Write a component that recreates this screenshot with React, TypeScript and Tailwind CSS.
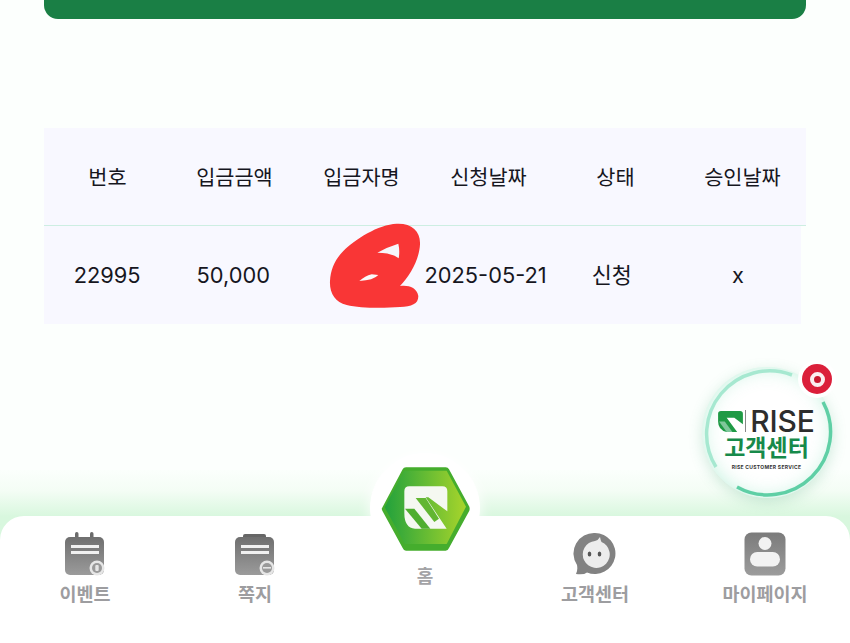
const HEADERS = ["번호", "입금금액", "입금자명", "신청날짜", "상태", "승인날짜"];
const CELLS = ["22995", "50,000", "", "2025-05-21", "신청", "x"];

function CalendarIcon() {
  return (
    <svg width="42" height="44" viewBox="0 0 42 44">
      <defs>
        <linearGradient id="cal" x1="0" y1="0" x2="0" y2="1">
          <stop offset="0" stopColor="#6f6f6f" />
          <stop offset="1" stopColor="#9b9b9b" />
        </linearGradient>
      </defs>
      <rect x="11" y="0" width="3.500" height="10" rx="1.700" fill="#6b6b6b" />
      <rect x="26" y="0" width="3.500" height="10" rx="1.700" fill="#6b6b6b" />
      <rect x="1" y="5" width="39" height="38" rx="5" fill="url(#cal)" />
      <rect x="7" y="13" width="28" height="3" fill="#f1f1f1" />
      <rect x="7" y="19" width="28" height="3" fill="#f1f1f1" />
      <circle cx="33" cy="36" r="7.500" fill="#e6e6e6" />
      <circle cx="33" cy="36" r="5" fill="#9a9a9a" />
      <rect x="31.300" y="33" width="3.400" height="6" rx="1" fill="#e6e6e6" />
    </svg>
  );
}

function NoteIcon() {
  return (
    <svg width="42" height="44" viewBox="0 0 42 44">
      <defs>
        <linearGradient id="note" x1="0" y1="0" x2="0" y2="1">
          <stop offset="0" stopColor="#6f6f6f" />
          <stop offset="1" stopColor="#9b9b9b" />
        </linearGradient>
      </defs>
      <rect x="9" y="2" width="23" height="6" rx="2" fill="#666" />
      <rect x="1" y="5" width="39" height="38" rx="5" fill="url(#note)" />
      <rect x="7" y="13" width="28" height="3" fill="#f1f1f1" />
      <rect x="7" y="19" width="28" height="3" fill="#f1f1f1" />
      <circle cx="33" cy="36" r="7.500" fill="#e6e6e6" />
      <circle cx="33" cy="36" r="5" fill="#9a9a9a" />
      <rect x="29" y="35" width="8" height="1.600" fill="#e6e6e6" />
    </svg>
  );
}

function ChatIcon() {
  return (
    <svg width="44" height="44" viewBox="0 0 44 44">
      <path d="M22 1a20.500 20.500 0 1 1-8 39.400q-3 2.600-11 1.600q2-4 1-9A20.500 20.500 0 0 1 22 1z" fill="#828282" />
      <path d="M22 9q3-.5 5-4q.5 3 1.500 5A13.500 13.500 0 1 1 22 9z" fill="#ececec" />
      <ellipse cx="16.500" cy="22" rx="1.800" ry="2.500" fill="#555" />
      <ellipse cx="26.500" cy="22" rx="1.800" ry="2.500" fill="#555" />
    </svg>
  );
}

function PersonIcon() {
  return (
    <svg width="42" height="44" viewBox="0 0 42 44">
      <defs>
        <linearGradient id="person" x1="0" y1="0" x2="0" y2="1">
          <stop offset="0" stopColor="#7b7b7b" />
          <stop offset="1" stopColor="#9c9c9c" />
        </linearGradient>
      </defs>
      <rect x="0.500" y="0.500" width="41" height="43" rx="7" fill="url(#person)" />
      <circle cx="21" cy="11.500" r="6.500" fill="#f2f2f2" />
      <rect x="6" y="20" width="30" height="14.500" rx="7.200" fill="#f2f2f2" />
    </svg>
  );
}

function HomeLogo() {
  return (
    <svg width="130" height="150" viewBox="0 0 390 450" className="block">
      <defs>
        <linearGradient id="hex" x1="0" y1="0" x2="1" y2="0">
          <stop offset="0" stopColor="#22a13c" />
          <stop offset="1" stopColor="#a8d52b" />
        </linearGradient>
      </defs>
      <path
        d="M65 176 L128 58 Q131 52 138 52 H257 Q264 52 267 58 L328 170 Q330 176 328 182 L267 294 Q264 302 257 302 H138 Q131 302 128 294 L67 182 Z"
        fill="#45ad2d"
      />
      <path d="M74 172 L133 62 H260 L318 170 L260 282 H135 Z" fill="url(#hex)" />
      <g transform="translate(105 84)">
        <path
          d="M28 40 Q28 25 43 25 H142 Q157 25 157 40 V100 L100 58 H92 L155 152 H60 Q28 150 28 105 Z"
          fill="#f5f8f1"
        />
        <path d="M62 60 H92 L132 122 L118 132 Z" fill="#62b632" />
        <path d="M30 92 H58 L106 152 H80 Z" fill="#4fae2f" />
      </g>
    </svg>
  );
}

function NavItem({ label, icon }: { label: string; icon: React.ReactNode }) {
  return (
    <div className="flex flex-col items-center pt-[15px]">
      <div className="flex h-[46px] items-center">{icon}</div>
      <span className="mt-[4px] text-[18.500px] leading-[26px] font-bold text-[#9d9da0]">{label}</span>
    </div>
  );
}

export default function App() {
  return (
    <div
      className="relative flex h-[643px] w-[850px] flex-col overflow-hidden bg-[#fcfffd] text-[#16161e]"
      style={{ fontFamily: 'Inter, "Noto Sans CJK KR", sans-serif' }}
    >
      <div className="mx-[44px] h-[19px] rounded-b-[14px] bg-[#1a7f45]" />

      <div className="mt-[109px] ml-[44px]">
        <div className="grid h-[98px] w-[762px] grid-cols-6 items-center border-b border-[#cdeee2] bg-[#f8f8ff] pt-[2px] text-center text-[20.800px]">
          {HEADERS.map((h) => (
            <div key={h}>{h}</div>
          ))}
        </div>
        <div className="grid h-[98px] w-[757px] grid-cols-6 items-center bg-[#f8f8ff] text-center text-[21.800px]">
          {CELLS.map((c, i) => (
            <div key={i} className="relative">
              {c}
              {i === 2 && (
                <svg
                  width="140"
                  height="120"
                  viewBox="0 0 420 360"
                  className="absolute top-[-74px] left-[4px]"
                >
                  <path
                    d="M290 68 C335 66 362 90 360 130 C358 175 330 225 300 255 C325 252 350 258 355 285 C355 310 335 316 300 318 C250 322 180 322 140 312 C105 305 88 275 90 240 C92 205 105 175 130 150 C165 115 235 70 290 68 Z"
                    fill="#f93636"
                  />
                  <path d="M232 155 Q262 138 295 128 Q300 150 296 172 Q275 155 232 155 Z" fill="#f6f6fb" />
                  <path d="M178 240 Q195 225 215 220 L235 222 Q220 238 178 240 Z" fill="#fafafa" />
                </svg>
              )}
            </div>
          ))}
        </div>
      </div>

      <div className="flex-1" />

      <div className="relative h-[173px] bg-linear-to-b from-[#fbfffc] via-[#f4fdf5] via-[12%] to-[#d8f7de] to-[27%] pt-[46px]">
        <nav className="grid h-[127px] grid-cols-5 rounded-t-[24px] bg-white">
          <NavItem label="이벤트" icon={<CalendarIcon />} />
          <NavItem label="쪽지" icon={<NoteIcon />} />
          <div />
          <NavItem label="고객센터" icon={<ChatIcon />} />
          <NavItem label="마이페이지" icon={<PersonIcon />} />
        </nav>

        <div className="absolute top-[-20px] left-[360px] h-[150px] w-[130px]">
          <div className="absolute top-[3px] left-[10px] h-[110px] w-[110px] rounded-full bg-white shadow-[0_0_14px_rgba(255,255,255,0.9)]" />
          <div className="absolute top-0 left-0">
            <HomeLogo />
          </div>
          <div className="absolute top-[114px] left-0 w-full text-center text-[18px] leading-[26px] font-bold text-[#a3a3a6]">
            홈
          </div>
        </div>
      </div>

      <div className="absolute top-[367px] left-[702px] h-[131px] w-[131px]">
        <div className="absolute inset-0 rounded-full bg-white shadow-[0_4px_14px_rgba(60,160,110,0.22),inset_0_0_20px_rgba(120,225,180,0.45)]" />
        <svg width="131" height="131" viewBox="0 0 131 131" className="absolute inset-0">
          <path d="M14 100 A63 63 0 0 1 90 8" fill="none" stroke="#a6e8d0" strokeWidth="3.500" />
          <path d="M121 35 A63 63 0 0 1 35 120" fill="none" stroke="#5fcfa5" strokeWidth="3.500" />
        </svg>
        <div className="absolute top-[41px] left-[-1px] flex w-full flex-col items-center">
          <div className="flex h-[26px] items-center">
            <svg width="25" height="21" viewBox="0 0 26 22" className="mr-[2px]">
              <path d="M3 0 H23 Q26 0 26 3 V14 L17 7 H9 L20 22 H9 Q0 20 0 11 V3 Q0 0 3 0Z" fill="#1f9a45" />
              <path d="M1 11 H7 L15 22 H9 Z" fill="#7fc79b" />
            </svg>
            <div className="mr-[4px] h-[22px] w-[1px] bg-[#888]" />
            <span className="text-[30px] leading-[26px] font-medium tracking-[-0.200px] text-[#2d2d2d]">RISE</span>
          </div>
          <span className="mt-[1px] text-[23px] leading-[26px] font-semibold text-[#178a4a]">고객센터</span>
          <span className="mt-[3px] text-[5px] leading-[6px] font-bold tracking-[0.300px] text-[#333]">RISE CUSTOMER SERVICE</span>
        </div>
        <div className="absolute top-[-7px] left-[96px] flex h-[38px] w-[38px] items-center justify-center rounded-full bg-white">
          <div className="flex h-[30px] w-[30px] items-center justify-center rounded-full bg-[#db1f3a]">
            <div className="h-[15px] w-[15px] rounded-full border-[4px] border-[#fbeef0] bg-[#c8182f]" />
          </div>
        </div>
      </div>
    </div>
  );
}
